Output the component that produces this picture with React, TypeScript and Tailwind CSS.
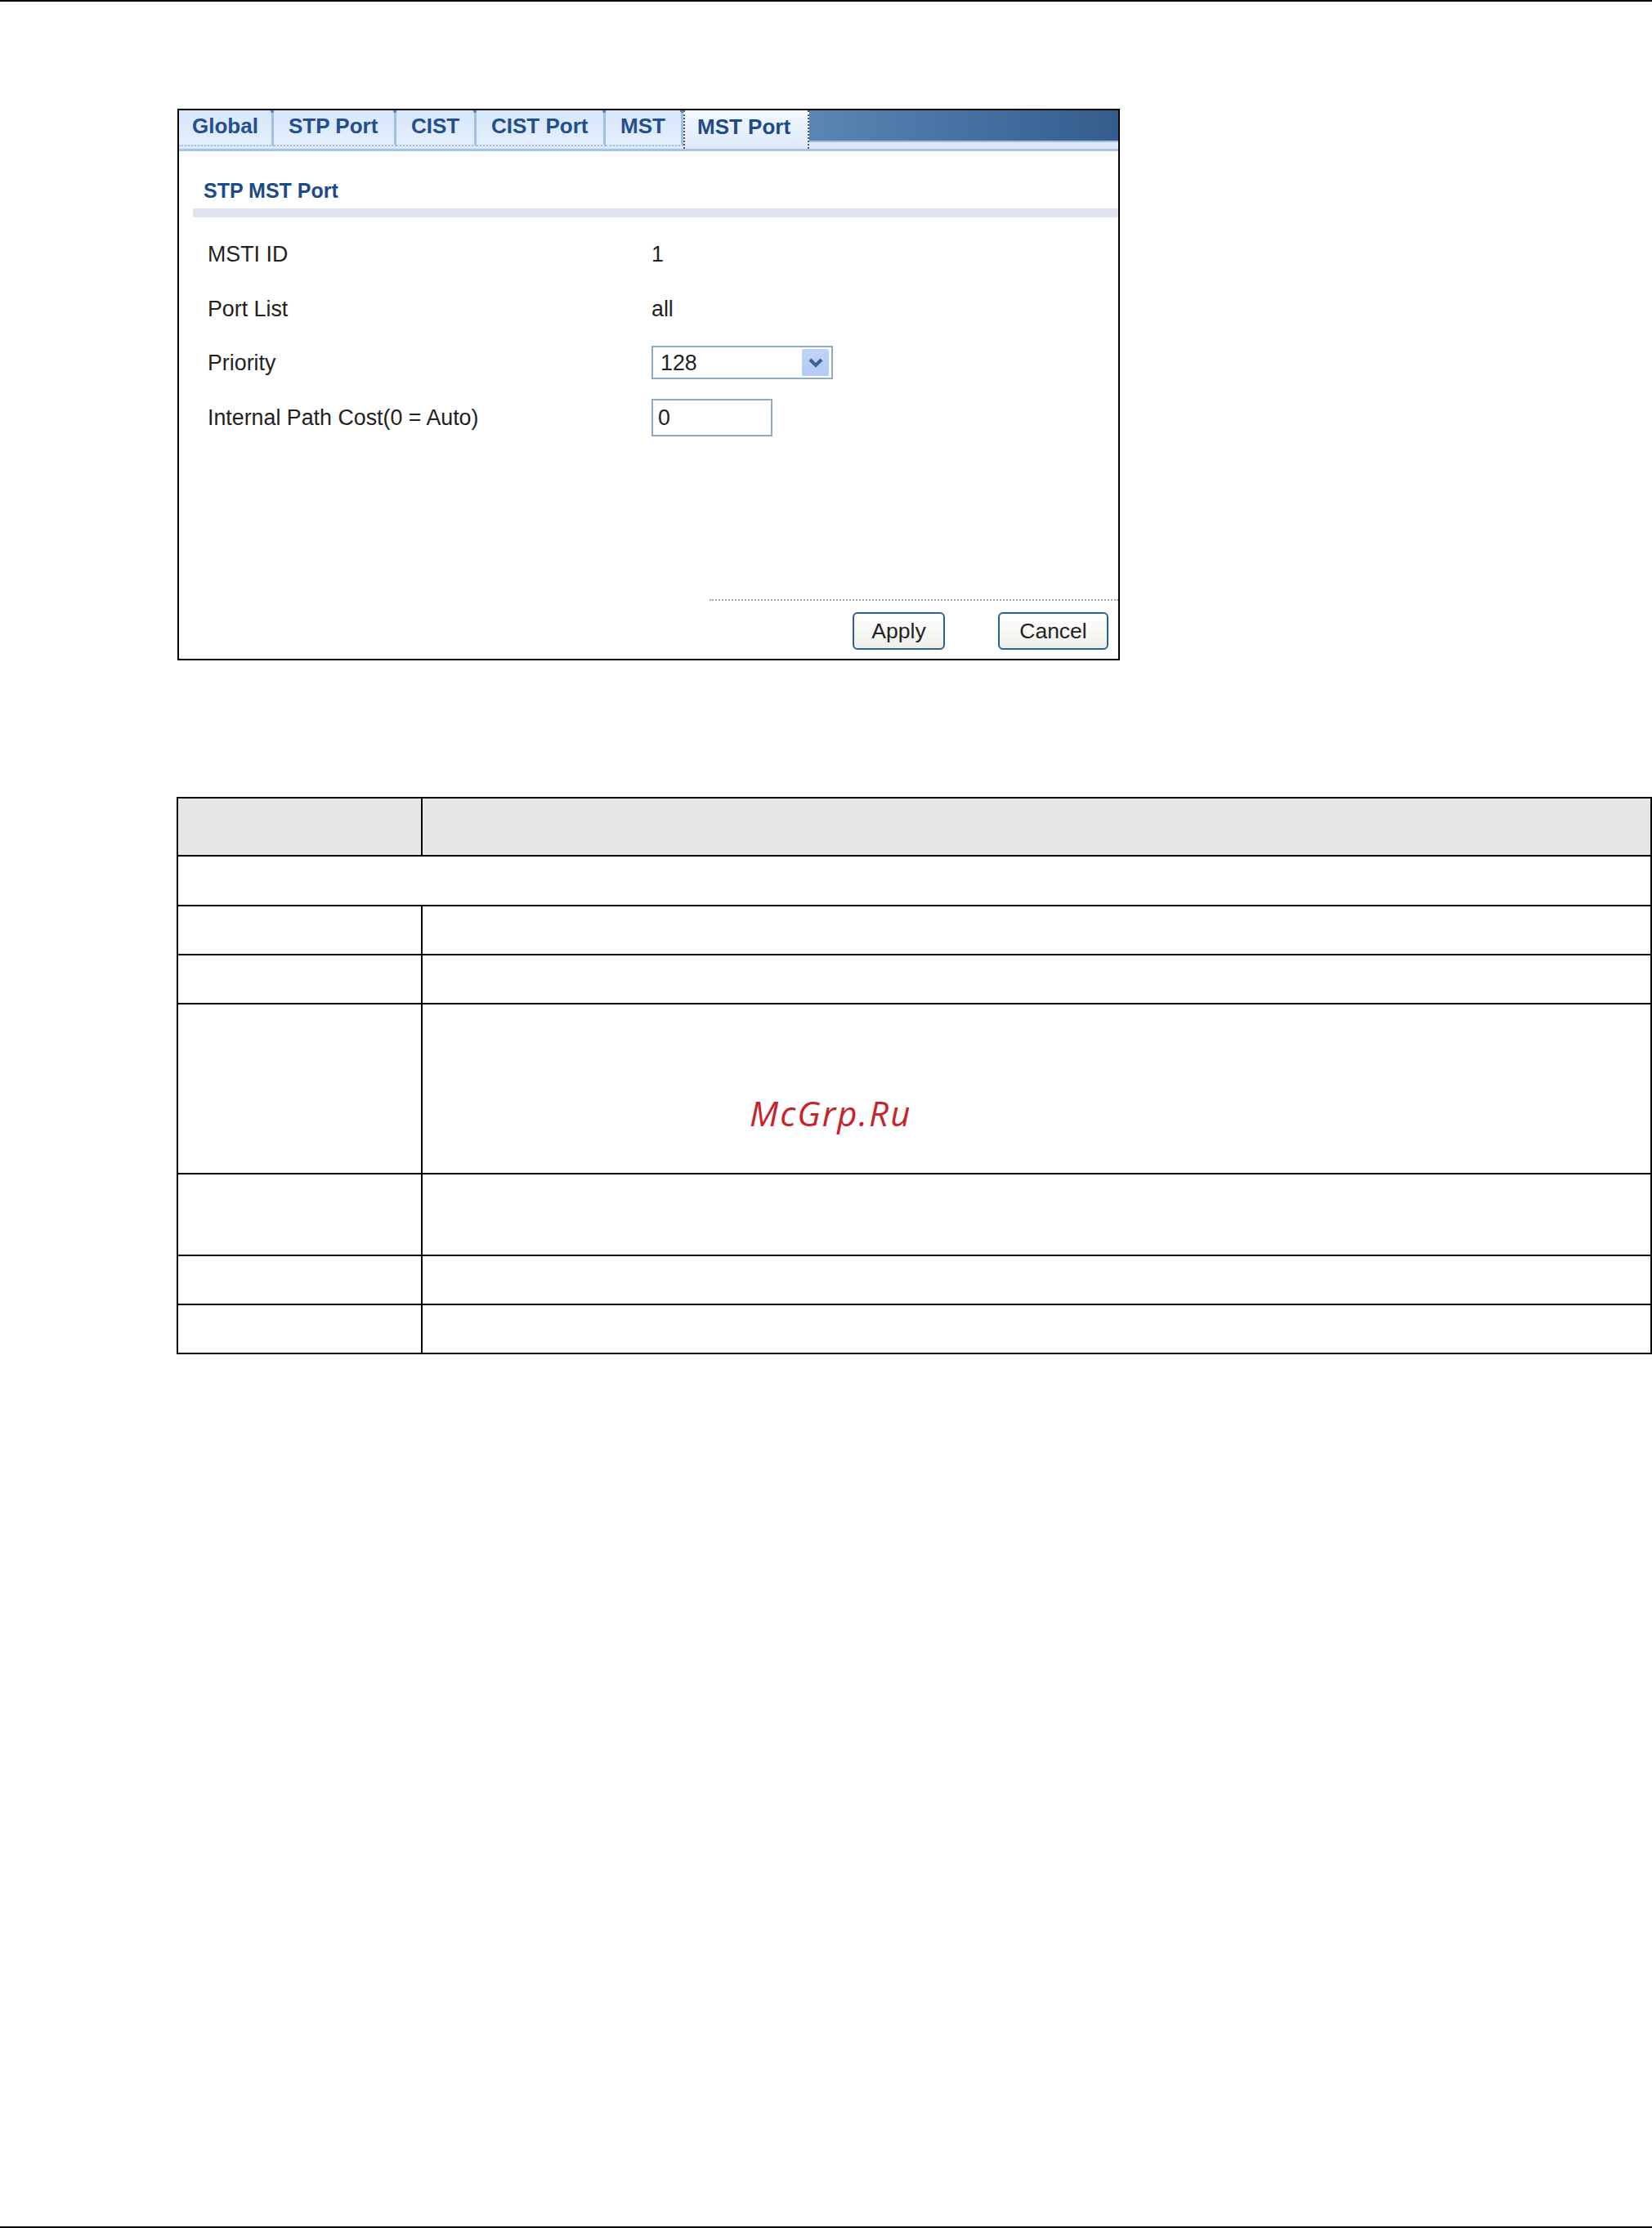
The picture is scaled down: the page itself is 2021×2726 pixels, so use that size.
const tabs = [
  { label: "Global", width: "w-[116px]", pad: "pl-[16px]" },
  { label: "STP Port", width: "w-[150px]", pad: "pl-[18px]" },
  { label: "CIST", width: "w-[98px]", pad: "pl-[18px]" },
  { label: "CIST Port", width: "w-[158px]", pad: "pl-[18px]" },
  { label: "MST", width: "w-[95px]", pad: "pl-[18px]" },
];

const fields = [
  { label: "MSTI ID", value: "1" },
  { label: "Port List", value: "all" },
];

function Tabs() {
  return (
    <div className="flex h-[47px] w-full bg-[#dde9fb]">
      <div className="flex h-full">
        {tabs.map((tab) => (
          <div
            key={tab.label}
            className={`${tab.width} ${tab.pad} relative h-[44px] border-r-[3px] border-b-2 border-r-[#a3bfe4] border-b-[#a9bedb] border-dotted bg-gradient-to-b from-[#d6e6fb] to-[#e4effd] text-[26px] leading-[29px] pt-[5px] font-bold text-[#254f8c] [border-right-style:solid]`}
          >
            {tab.label}
            <span className="absolute -right-[4px] top-0 w-[5px] h-[3px] rounded-b-[2px] bg-[#5a86b6]" />
          </div>
        ))}
        <div className="w-[154px] h-[47px] pl-[15px] pt-[6px] bg-gradient-to-b from-[#f4f8fe] to-[#dce9fb] border-x-2 border-dotted border-x-[#555] text-[26px] leading-[29px] font-bold text-[#1f4a8a]">
          MST Port
        </div>
      </div>
      <div className="flex-1 flex flex-col">
        <div className="h-[37px] bg-gradient-to-r from-[#5a86b6] to-[#345d8e]" />
        <div className="h-[10px] bg-[#dde9fb] border-t-2 border-[#9dbbe2]" />
      </div>
    </div>
  );
}

function Panel() {
  return (
    <div className="relative ml-[217px] mt-[131px] w-[1153px] h-[675px] border-2 border-black bg-white">
      <Tabs />
      <div className="h-[3px] bg-[#a8c3e8]" />
      <div className="ml-[30px] mt-[32px] text-[25px] leading-[32px] font-bold text-[#1d4a8c]">
        STP MST Port
      </div>
      <div className="ml-[17px] mt-[6px] h-[11px] bg-[#e0e4ee]" />
      <div className="ml-[35px] mt-[29px] flex flex-col text-[26.8px] leading-[32px] text-[#222]">
        {fields.map((field) => (
          <div key={field.label} className="flex h-[66.5px]">
            <div className="w-[543px]">{field.label}</div>
            <div>{field.value}</div>
          </div>
        ))}
        <div className="flex h-[67px]">
          <div className="w-[543px]">Priority</div>
          <div className="-mt-[5px] flex items-center w-[222px] h-[41px] border-2 border-[#8eaac9] pl-[9px] pr-[3px] justify-between">
            <span>128</span>
            <span className="flex items-center justify-center w-[33px] h-[33px] rounded-[2px] bg-gradient-to-b from-[#c0d2f6] to-[#b4caf5]">
              <svg width="18" height="14" viewBox="0 0 18 14">
                <path d="M2 3l7 7 7-7" fill="none" stroke="#3f5f8c" strokeWidth="4" />
              </svg>
            </span>
          </div>
        </div>
        <div className="flex">
          <div className="w-[543px]">Internal Path Cost(0 = Auto)</div>
          <div className="-mt-[7px] w-[148px] h-[46px] border-2 border-[#8eaac9] pl-[6px] flex items-center">
            0
          </div>
        </div>
      </div>
      <div className="absolute left-[649px] right-0 top-[598px] border-t-2 border-dotted border-[#a4a4a4]" />
      <div className="absolute right-[12px] top-[614px] flex gap-[65px] text-[26.5px] text-[#222]">
        <button className="w-[113px] h-[46px] rounded-[6px] border-2 border-[#2c5f94] bg-gradient-to-b from-white to-[#efefe9] leading-none">
          Apply
        </button>
        <button className="w-[135px] h-[46px] rounded-[6px] border-2 border-[#2c5f94] bg-gradient-to-b from-white to-[#efefe9] leading-none">
          Cancel
        </button>
      </div>
    </div>
  );
}

const rowHeights = ["h-[61px]", "h-[60px]", "h-[60px]", "h-[208px]", "h-[100px]", "h-[60px]", "h-[58px]"];

function SpecTable() {
  return (
    <div className="ml-[216px] mt-[167px] border-2 border-black text-black">
      <div className="flex h-[71px] border-b-2 border-black bg-[#e6e6e6]">
        <div className="w-[299px] border-r-2 border-black" />
        <div className="flex-1" />
      </div>
      <div className={`${rowHeights[0]} border-b-2 border-black`} />
      {rowHeights.slice(1).map((height, i) => (
        <div
          key={i}
          className={`${height} flex relative ${i < rowHeights.length - 2 ? "border-b-2 border-black" : ""}`}
        >
          <div className="w-[299px] border-r-2 border-black" />
          <div className="flex-1" />
          {i === 2 && (
            <span className="absolute left-[699px] top-[110px] text-[42px] leading-[46px] italic tracking-[2px] text-[#c8232a] [font-family:'Open_Sans',sans-serif]">
              McGrp.Ru
            </span>
          )}
        </div>
      ))}
    </div>
  );
}

export default function App() {
  return (
    <div className="w-[2021px] h-[2726px] flex flex-col bg-white [font-family:'Liberation_Sans',Arial,sans-serif] overflow-hidden">
      <div className="h-[2px] bg-black" />
      <Panel />
      <SpecTable />
      <div className="mt-auto h-[2px] bg-black" />
    </div>
  );
}
